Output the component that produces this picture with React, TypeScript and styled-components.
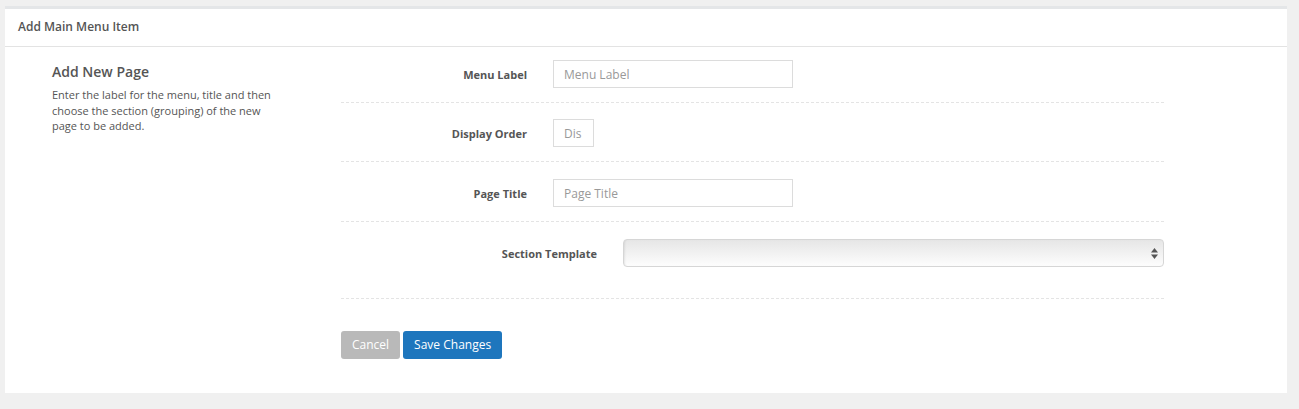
import React from "react";
import styled, { createGlobalStyle } from "styled-components";

const GlobalStyle = createGlobalStyle`
  html, body { margin: 0; padding: 0; background: #f0f0f0; }
  body { font-family: "Open Sans", "Liberation Sans", Arial, sans-serif; color: #555; }
  * { box-sizing: border-box; }
`;

const Page = styled.div`
  padding: 6px 12px 16px 5px;
`;

const Panel = styled.section`
  background: #fff;
  border-top: 3px solid #e4e6e8;
`;

const PanelHeader = styled.header`
  padding: 9px 13px 11px;
  line-height: 17px;
  font-size: 12px;
  font-weight: 600;
  color: #555;
  border-bottom: 1px solid #e3e3e3;
`;

const PanelBody = styled.div`
  display: grid;
  grid-template-columns: 336px 823px;
  padding-bottom: 34px;
`;

const Intro = styled.div`
  padding: 15px 0 0 47px;
`;

const IntroTitle = styled.h3`
  margin: 0 0 5px;
  font-size: 14px;
  line-height: 20px;
  font-weight: 600;
  color: #555;
`;

const IntroText = styled.p`
  margin: 0;
  width: 232px;
  font-size: 11px;
  line-height: 15.7px;
  color: #555;
`;

const Form = styled.form`
  display: flex;
  flex-direction: column;
  padding-top: 13px;
`;

const Row = styled.div<{ $top?: number; $bottom?: number }>`
  display: flex;
  align-items: center;
  gap: 26px;
  padding: ${(p) => p.$top ?? 17}px 0 ${(p) => p.$bottom ?? 14}px;
  border-bottom: 1px dashed #e4e4e4;
`;

const Label = styled.label<{ $width: number }>`
  flex: 0 0 ${(p) => p.$width}px;
  text-align: right;
  font-size: 11px;
  font-weight: 700;
  color: #555;
`;

const TextInput = styled.input<{ $width: number }>`
  width: ${(p) => p.$width}px;
  height: 28px;
  padding: 0 10px;
  border: 1px solid #dcdcdc;
  border-radius: 0;
  font-family: inherit;
  font-size: 12px;
  color: #555;
  outline: none;
  &::placeholder { color: #999; }
`;

const SelectBox = styled.div`
  flex: 1;
  height: 28px;
  position: relative;
  border: 1px solid #d6d6d6;
  border-radius: 4px;
  background: linear-gradient(#e6e6e6, #f6f6f6 70%, #fdfdfd);
  box-shadow: inset 2px 0 2px -1px rgba(0, 0, 0, 0.08);
`;

const SelectArrows = styled.svg`
  position: absolute;
  right: 5px;
  top: 8px;
`;

const Actions = styled.div`
  display: flex;
  gap: 3px;
  padding-top: 32px;
`;

const Button = styled.button<{ $primary?: boolean }>`
  height: 28px;
  padding: 0 11px;
  border: none;
  border-radius: 3px;
  background: ${(p) => (p.$primary ? "#1e76bd" : "#b9b9b9")};
  color: #fff;
  font-family: inherit;
  font-size: 12px;
  line-height: 28px;
  cursor: pointer;
`;

export default function App() {
  return (
    <>
      <GlobalStyle />
      <Page>
        <Panel>
          <PanelHeader>Add Main Menu Item</PanelHeader>
          <PanelBody>
            <Intro>
              <IntroTitle>Add New Page</IntroTitle>
              <IntroText>
                Enter the label for the menu, title and then choose the section (grouping) of the new page to be added.
              </IntroText>
            </Intro>
            <Form onSubmit={(e) => e.preventDefault()}>
              <Row $top={0}>
                <Label $width={186}>Menu Label</Label>
                <TextInput $width={240} placeholder="Menu Label" />
              </Row>
              <Row $top={16}>
                <Label $width={186}>Display Order</Label>
                <TextInput $width={41} placeholder="Dis" />
              </Row>
              <Row>
                <Label $width={186}>Page Title</Label>
                <TextInput $width={240} placeholder="Page Title" />
              </Row>
              <Row $bottom={31}>
                <Label $width={256}>Section Template</Label>
                <SelectBox>
                  <SelectArrows width="7" height="11" viewBox="0 0 7 11">
                    <path d="M3.5 0 L7 4.5 L0 4.5 Z" fill="#555" />
                    <path d="M0 6.5 L7 6.5 L3.5 11 Z" fill="#555" />
                  </SelectArrows>
                </SelectBox>
              </Row>
              <Actions>
                <Button type="button">Cancel</Button>
                <Button type="submit" $primary>Save Changes</Button>
              </Actions>
            </Form>
          </PanelBody>
        </Panel>
      </Page>
    </>
  );
}
